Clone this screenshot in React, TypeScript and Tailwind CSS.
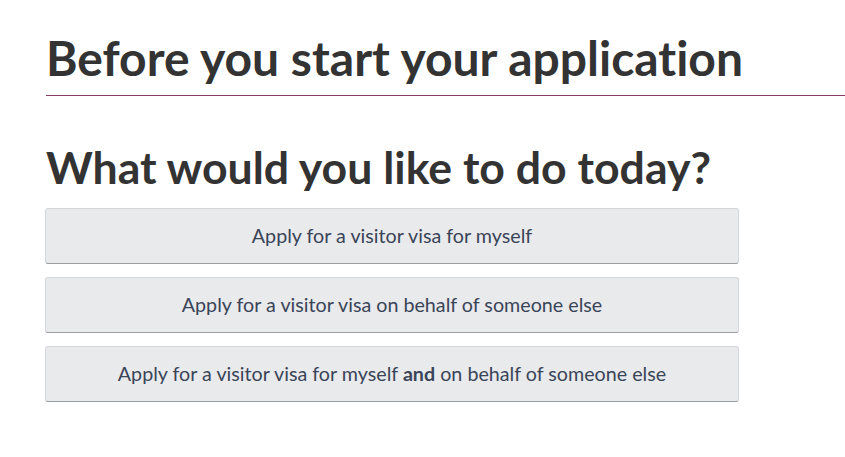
import React from "react";

const Btn = ({ children }: { children: React.ReactNode }) => (
  <button className="w-full h-[56px] rounded-[3px] bg-[#e9eaec] border border-[#d4d6d9] border-b-[#9a9da2] text-[19.7px] text-[#3a4558] flex items-center justify-center [font-variant-ligatures:none]" style={{ fontFamily: "Lato, sans-serif" }}>
    {children}
  </button>
);

export default function App() {
  return (
    <div className="bg-white min-h-[457px] w-[845px] overflow-hidden [font-variant-ligatures:none]" style={{ fontFamily: "Lato, sans-serif" }}>
      <div className="pl-[46px]">
        <h1 className="pt-[28px] text-[48px] font-bold leading-[60px] text-[#333333] pb-[7px] border-b border-[#8a3d68]">
          Before you start your application
        </h1>
        <h2 className="mt-[43px] text-[44.6px] font-bold leading-[56px] text-[#333333]">
          What would you like to do today?
        </h2>
        <div className="mt-[13px] w-[694px] flex flex-col gap-[13px] -ml-px">
          <Btn>Apply for a visitor visa for myself</Btn>
          <Btn>Apply for a visitor visa on behalf of someone else</Btn>
          <Btn>
            Apply for a visitor visa for myself&nbsp;<b className="font-bold">and</b>&nbsp;on behalf of someone else
          </Btn>
        </div>
      </div>
    </div>
  );
}
